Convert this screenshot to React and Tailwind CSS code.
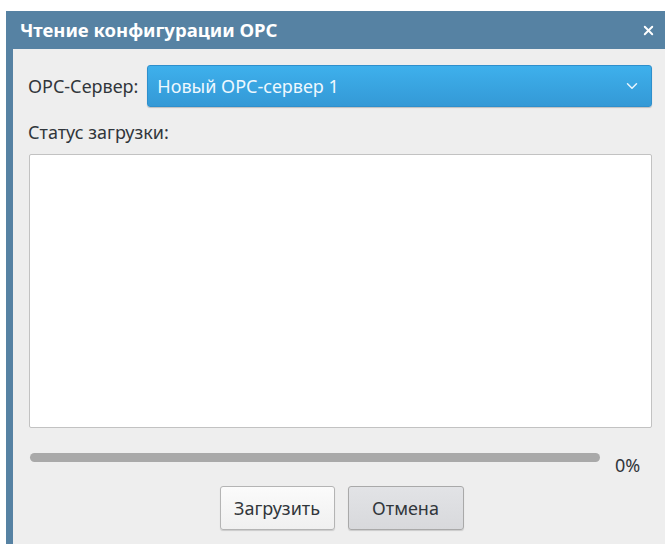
import { ChevronDown, X } from 'lucide-react'

export default function App() {
  return (
    <div className="flex h-[544px] w-[665px] flex-col overflow-hidden bg-white pl-[6px] pt-[11px] font-['Noto_Sans',sans-serif] text-[#31363b]">
      <div className="flex flex-1 flex-col bg-[#5682a3]">
        <div className="flex h-[38px] items-center justify-between pl-[14px] pr-[9px]">
          <span className="text-[18.5px] font-bold text-white">Чтение конфигурации OPC</span>
          <X size={15} strokeWidth={3} className="text-white" />
        </div>

        <div className="ml-[7px] flex flex-1 flex-col bg-[#eeeeee] pl-[15px] pr-[13px] pt-[16px]">
          <div className="flex items-center gap-[9px]">
            <span className="text-[18px]">OPC-Сервер:</span>
            <button className="flex h-[42px] flex-1 items-center justify-between rounded-[3px] border border-[#2e8fcc] bg-gradient-to-b from-[#3eb0ec] to-[#3499d6] pl-[9px] pr-[10px] text-[18px] text-[#eef8fe] shadow-[0_1px_1px_rgba(0,0,0,0.2)]">
              Новый OPC-сервер 1
              <ChevronDown size={18} strokeWidth={2} className="text-[#e8f5fd]" />
            </button>
          </div>

          <div className="mt-[12px] text-[18px] leading-[27px]">Статус загрузки:</div>

          <div className="ml-[1px] mt-[8px] h-[274px] rounded-[2px] border border-[#c2c2c2] bg-white" />

          <div className="mt-[25px] flex items-start">
            <div className="ml-[2px] h-[9px] w-[570px] rounded-full bg-[#a9a9a9]" />
            <span className="ml-[15px] text-[18px] leading-[24px]">0%</span>
          </div>

          <div className="mt-[9px] flex justify-center gap-[13px] pl-[3px]">
            <button className="h-[44px] w-[115px] rounded-[3px] border border-[#b4b4b4] bg-gradient-to-b from-[#fbfbfb] to-[#f0f0f0] text-[18px] shadow-[0_1px_1px_rgba(0,0,0,0.15)]">
              Загрузить
            </button>
            <button className="h-[44px] w-[116px] rounded-[3px] border border-[#a9a9a9] bg-gradient-to-b from-[#e2e3e6] to-[#d8d9dc] text-[18px] shadow-[0_1px_1px_rgba(0,0,0,0.15)]">
              Отмена
            </button>
          </div>
        </div>
      </div>
    </div>
  )
}
